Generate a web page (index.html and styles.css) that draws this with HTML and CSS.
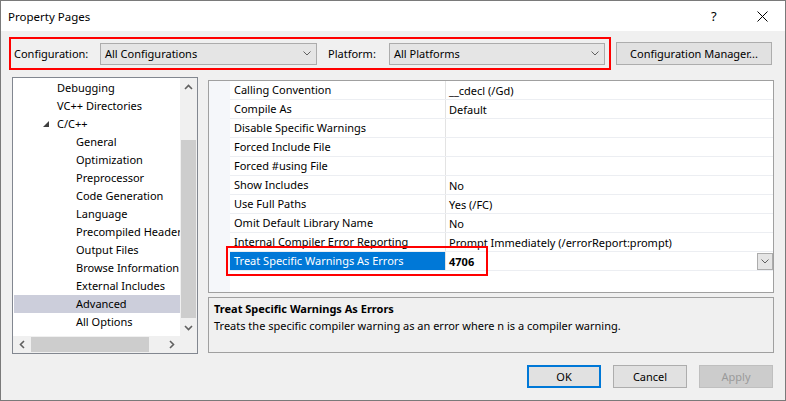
FILE: index.html
```html
<!DOCTYPE html>
<html lang="en">
<head>
    <meta charset="UTF-8">
    <title>Property Pages</title>
    <link rel="stylesheet" href="styles.css">
</head>
<body>
    <div class="window">
        <!-- Titelleiste -->
        <div class="titlebar">
            <span class="title">Property Pages</span>
            <span class="help">?</span>
            <span class="close">
                <svg width="11" height="11" viewBox="0 0 11 11"><path d="M0.5 0.5 L10.5 10.5 M10.5 0.5 L0.5 10.5" stroke="#000" stroke-width="1" fill="none"/></svg>
            </span>
        </div>

        <div class="content">
            <div class="toolbar">
                <div class="config-box">
                    <span class="lbl lbl-config">Configuration:</span>
                    <div class="combo combo-config">
                        <span>All Configurations</span>
                        <svg class="chev" width="8" height="5" viewBox="0 0 8 5"><path d="M0.5 0.5 L4 4 L7.5 0.5" stroke="#606060" fill="none"/></svg>
                    </div>
                    <span class="lbl lbl-platform">Platform:</span>
                    <div class="combo combo-platform">
                        <span>All Platforms</span>
                        <svg class="chev" width="8" height="5" viewBox="0 0 8 5"><path d="M0.5 0.5 L4 4 L7.5 0.5" stroke="#606060" fill="none"/></svg>
                    </div>
                </div>
                <button class="btn btn-manager">Configuration Manager...</button>
            </div>

            <div class="main">
                <!-- Baum links -->
                <div class="tree-panel">
                    <div class="tree-body">
                        <ul class="tree">
                            <li class="lvl1">Debugging</li>
                            <li class="lvl1">VC++ Directories</li>
                            <li class="lvl0"><svg class="tri" width="6" height="6" viewBox="0 0 6 6"><polygon points="6,0 6,6 0,6" fill="#404040"/></svg>C/C++</li>
                            <li class="lvl2">General</li>
                            <li class="lvl2">Optimization</li>
                            <li class="lvl2">Preprocessor</li>
                            <li class="lvl2">Code Generation</li>
                            <li class="lvl2">Language</li>
                            <li class="lvl2">Precompiled Headers</li>
                            <li class="lvl2">Output Files</li>
                            <li class="lvl2">Browse Information</li>
                            <li class="lvl2">External Includes</li>
                            <li class="lvl2 selected">Advanced</li>
                            <li class="lvl2">All Options</li>
                        </ul>
                        <div class="vscroll">
                            <div class="arrow"><svg width="9" height="6" viewBox="0 0 9 6"><path d="M1 5 L4.5 1.5 L8 5" stroke="#606060" stroke-width="1.6" fill="none"/></svg></div>
                            <div class="vtrack"><div class="vthumb"></div></div>
                            <div class="arrow"><svg width="9" height="6" viewBox="0 0 9 6"><path d="M1 1 L4.5 4.5 L8 1" stroke="#606060" stroke-width="1.6" fill="none"/></svg></div>
                        </div>
                    </div>
                    <div class="hscroll-row">
                        <div class="hscroll">
                            <div class="arrow"><svg width="6" height="9" viewBox="0 0 6 9"><path d="M5 1 L1.5 4.5 L5 8" stroke="#606060" stroke-width="1.6" fill="none"/></svg></div>
                            <div class="htrack"><div class="hthumb"></div></div>
                            <div class="arrow"><svg width="6" height="9" viewBox="0 0 6 9"><path d="M1 1 L4.5 4.5 L1 8" stroke="#606060" stroke-width="1.6" fill="none"/></svg></div>
                        </div>
                        <div class="corner"></div>
                    </div>
                </div>

                <!-- Eigenschaften rechts -->
                <div class="right">
                    <div class="grid">
                        <div class="gutter"></div>
                        <div class="rows">
                            <div class="row"><div class="name">Calling Convention</div><div class="value">__cdecl (/Gd)</div></div>
                            <div class="row"><div class="name">Compile As</div><div class="value">Default</div></div>
                            <div class="row"><div class="name">Disable Specific Warnings</div><div class="value"></div></div>
                            <div class="row"><div class="name">Forced Include File</div><div class="value"></div></div>
                            <div class="row"><div class="name">Forced #using File</div><div class="value"></div></div>
                            <div class="row"><div class="name">Show Includes</div><div class="value">No</div></div>
                            <div class="row"><div class="name">Use Full Paths</div><div class="value">Yes (/FC)</div></div>
                            <div class="row"><div class="name">Omit Default Library Name</div><div class="value">No</div></div>
                            <div class="row"><div class="name">Internal Compiler Error Reporting</div><div class="value">Prompt Immediately (/errorReport:prompt)</div></div>
                            <div class="row row-selected">
                                <div class="name">Treat Specific Warnings As Errors</div>
                                <div class="value"><b>4706</b>
                                    <span class="dd-btn"><svg width="8" height="5" viewBox="0 0 8 5"><path d="M0.5 0.5 L4 4 L7.5 0.5" stroke="#606060" fill="none"/></svg></span>
                                </div>
                            </div>
                        </div>
                        <div class="mark"></div>
                    </div>
                    <div class="desc">
                        <div class="desc-title">Treat Specific Warnings As Errors</div>
                        <div class="desc-text">Treats the specific compiler warning as an error where n is a compiler warning.</div>
                    </div>
                </div>
            </div>

            <div class="footer">
                <button class="btn btn-default">OK</button>
                <button class="btn">Cancel</button>
                <button class="btn btn-disabled">Apply</button>
            </div>
        </div>
    </div>
</body>
</html>
```

FILE: styles.css
```css
* {
    box-sizing: border-box;
}
body {
    margin: 0;
    font-family: "Noto Sans", "Open Sans", sans-serif;
    font-size: 11px;
    color: #000;
}
.window {
    width: 786px;
    height: 401px;
    border: 1px solid #7a7a7a;
    background-color: #f0f0f0;
    overflow: hidden;
    display: flex;
    flex-direction: column;
}
.titlebar {
    height: 30px;
    background-color: #fff;
    display: flex;
    align-items: center;
    padding-left: 7px;
    font-size: 11.5px;
}
.title {
    flex: 1;
}
.help {
    font-size: 13px;
    width: 12px;
    margin-right: 34px;
}
.close {
    display: flex;
    margin-right: 17px;
}

.content {
    flex: 1;
}
.toolbar {
    display: flex;
    align-items: center;
    margin-top: 6px;
    padding-left: 8px;
}
.config-box {
    display: flex;
    align-items: center;
    width: 602px;
    height: 33px;
    border: 2px solid #f00;
    padding-left: 3px;
}
.lbl-config {
    width: 86px;
}
.lbl-platform {
    width: 61px;
    margin-left: 11px;
}
.combo {
    display: flex;
    align-items: center;
    justify-content: space-between;
    height: 22px;
    background-color: #e5e5e5;
    border: 1px solid #acacac;
    padding: 0 5px 0 4px;
}
.combo-config {
    width: 217px;
}
.combo-platform {
    width: 216px;
}
.btn {
    font-family: inherit;
    font-size: 11px;
    color: #000;
    height: 23px;
    width: 74px;
    padding: 0;
    background-color: #e1e1e1;
    border: 1px solid #adadad;
}
.btn-manager {
    width: 156px;
    margin-left: 5px;
}

.main {
    display: flex;
    gap: 10px;
    margin-top: 7px;
    padding-left: 11px;
}
.tree-panel {
    width: 186px;
    height: 277px;
    border: 1px solid #828790;
    background-color: #fff;
}
.tree-body {
    display: flex;
    height: 258px;
}
.tree {
    list-style: none;
    margin: 0;
    padding: 1px 0 0 1px;
    width: 167px;
    overflow: hidden;
}
.tree li {
    height: 18px;
    line-height: 18px;
    white-space: nowrap;
    display: flex;
    align-items: center;
}
.tree .lvl0 {
    padding-left: 29px;
}
.tree .lvl1 {
    padding-left: 43px;
}
.tree .lvl2 {
    padding-left: 62px;
}
.tree .tri {
    margin-right: 8px;
}
.tree .selected {
    background-color: #cccedb;
}
.vscroll {
    width: 17px;
    display: flex;
    flex-direction: column;
    background-color: #f0f0f0;
}
.arrow {
    width: 17px;
    height: 17px;
    display: flex;
    align-items: center;
    justify-content: center;
    flex-shrink: 0;
}
.vtrack {
    flex: 1;
    padding-top: 45px;
}
.vthumb {
    height: 178px;
    margin: 0 1px;
    background-color: #cdcdcd;
}
.hscroll-row {
    display: flex;
    height: 17px;
}
.hscroll {
    display: flex;
    width: 167px;
    background-color: #f0f0f0;
}
.htrack {
    flex: 1;
    padding: 1px 0 1px 1px;
}
.hthumb {
    width: 118px;
    height: 100%;
    background-color: #cdcdcd;
}
.corner {
    flex: 1;
    background-color: #f0f0f0;
}

.right {
    width: 566px;
    display: flex;
    flex-direction: column;
    gap: 4px;
    padding-top: 3px;
}
.grid {
    position: relative;
    display: flex;
    height: 213px;
    border: 1px solid #a0a0a0;
    background-color: #fff;
}
.gutter {
    width: 21px;
    background-color: #f5f7fa;
}
.rows {
    flex: 1;
}
.row {
    display: flex;
    height: 19px;
    border-bottom: 1px solid #eceef2;
}
.name {
    width: 216px;
    padding-left: 4px;
    line-height: 18px;
    border-right: 1px solid #e3e3e3;
    white-space: nowrap;
    overflow: hidden;
}
.value {
    flex: 1;
    display: flex;
    align-items: center;
    padding-left: 3px;
    white-space: nowrap;
}
.row-selected .name {
    background-color: #0078d7;
    color: #fff;
}
.dd-btn {
    margin-left: auto;
    width: 16px;
    height: 17px;
    display: flex;
    align-items: center;
    justify-content: center;
    background-color: #e5e5e5;
    border: 1px solid #acacac;
}
.mark {
    position: absolute;
    left: 17px;
    top: 165px;
    width: 262px;
    height: 30px;
    border: 2px solid #f00;
}
.desc {
    height: 56px;
    border: 1px solid #a0a0a0;
    padding: 2px 5px;
    line-height: 17px;
}
.desc-title {
    font-weight: bold;
}

.footer {
    display: flex;
    justify-content: flex-end;
    gap: 12px;
    margin-top: 11px;
    padding-right: 12px;
}
.btn-default {
    border: 2px solid #0078d7;
}
.btn-disabled {
    background-color: #cccccc;
    border-color: #bfbfbf;
    color: #9a9a9a;
}
```
